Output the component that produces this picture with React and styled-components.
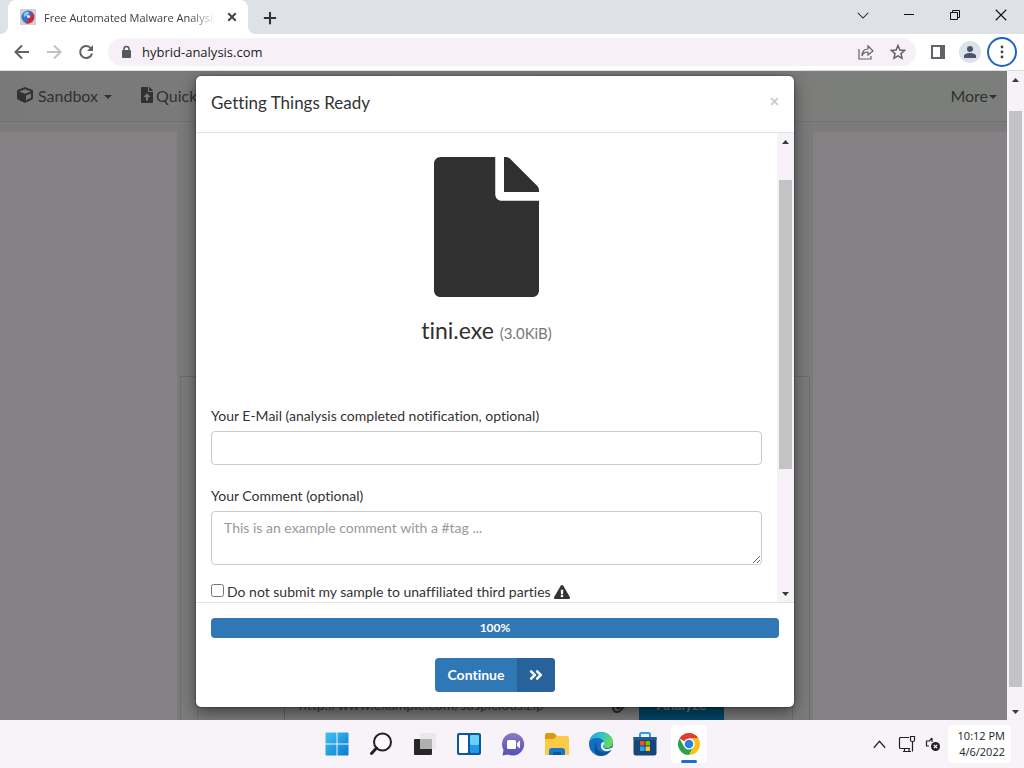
import React from 'react';
import styled, { createGlobalStyle, css } from 'styled-components';
import { FaCube, FaPaperclip, FaExclamationTriangle, FaAngleDoubleRight } from 'react-icons/fa';

const GlobalStyle = createGlobalStyle`
  *, *::before, *::after { box-sizing: border-box; }
  html, body { margin: 0; height: 100%; overflow: hidden; }
  button, input, textarea { font: inherit; color: inherit; }
  button { border: 0; background: none; padding: 0; }
  svg { display: block; flex: none; }
`;

const uiFont = '"Open Sans", "Noto Sans", sans-serif';
const siteFont = 'Lato, "Open Sans", sans-serif';

const Desktop = styled.div`
  display: flex;
  flex-direction: column;
  height: 100vh;
  font-family: ${uiFont};
  font-size: 12px;
  color: #202124;
`;

/* ---- Browser chrome ---- */

const TabStrip = styled.div`
  display: flex;
  align-items: flex-end;
  height: 34px;
  padding-left: 8px;
  background: #dee1e6;
`;

const Tab = styled.div`
  position: relative;
  display: flex;
  align-items: center;
  width: 240px;
  height: 34px;
  padding: 0 8px 0 12px;
  gap: 8px;
  border-radius: 8px 8px 0 0;
  background: #fff;
  &::before, &::after {
    content: '';
    position: absolute;
    bottom: 0;
    width: 8px;
    height: 8px;
  }
  &::before { left: -8px; background: radial-gradient(circle at 0 0, #dee1e6 8px, #fff 8px); }
  &::after { right: -8px; background: radial-gradient(circle at 100% 0, #dee1e6 8px, #fff 8px); }
`;

const TabTitle = styled.span`
  flex: 1;
  overflow: hidden;
  white-space: nowrap;
  color: #3c4043;
  font-size: 11px;
  mask-image: linear-gradient(to right, #000 85%, transparent);
`;

const IconButton = styled.button`
  display: flex;
  align-items: center;
  justify-content: center;
  width: ${(p) => p.$w || 32}px;
  height: ${(p) => p.$h || 32}px;
  color: ${(p) => p.$color || '#5f6368'};
`;

const NewTab = styled(IconButton)`
  margin-left: 6px;
`;

const WindowControls = styled.div`
  display: flex;
  align-self: flex-start;
  margin-left: auto;
`;

const Toolbar = styled.div`
  display: flex;
  align-items: center;
  height: 37px;
  padding: 0 7px 0 6px;
  background: #fff;
  border-bottom: 1px solid #dcdedd;
`;

const Omnibox = styled.div`
  display: flex;
  align-items: center;
  flex: 1;
  height: 28px;
  margin: 0 6px;
  padding: 0 2px 0 12px;
  border-radius: 14px;
  background: #f7f1f7;
`;

const Address = styled.input`
  flex: 1;
  min-width: 0;
  margin-left: 10px;
  padding: 0;
  border: 0;
  outline: 0;
  background: transparent;
  font-size: 13px;
`;

const Avatar = styled.button`
  display: flex;
  align-items: center;
  justify-content: center;
  width: 22px;
  height: 22px;
  margin: 0 6px 0 5px;
  border-radius: 50%;
  background: #dde1e8;
`;

const MenuButton = styled(IconButton)`
  width: 30px;
  height: 30px;
  border: 2px solid #1f62c5;
  border-radius: 50%;
`;

/* ---- Web page ---- */

const Viewport = styled.div`
  position: relative;
  display: flex;
  flex: 1;
  min-height: 0;
  overflow: hidden;
  font-family: ${siteFont};
  font-variant-ligatures: none;
`;

const Page = styled.div`
  position: relative;
  flex: 1;
  min-width: 0;
  overflow: hidden;
  background: #e9e9e9;
`;

const Navbar = styled.nav`
  display: flex;
  align-items: center;
  height: 51px;
  padding: 0 10px 2px 17px;
  border-bottom: 1px solid #d8d8d8;
  background: linear-gradient(to right, #e5e5e5, #e9ece7 60%, #ebefe8);
`;

const NavLink = styled.a`
  display: flex;
  align-items: center;
  gap: ${(p) => p.$gap || 3}px;
  margin-right: ${(p) => p.$after || 0}px;
  color: #5c5e5c;
  font-size: 16px;
  text-decoration: none;
`;

const Caret = styled.span`
  width: 0;
  height: 0;
  margin-left: ${(p) => p.$space || 0}px;
  margin-top: 3px;
  border: 4px solid transparent;
  border-top-color: currentColor;
  border-bottom: 0;
`;

const NavSpacer = styled.span`
  flex: 1;
`;

const Backing = styled.div`
  margin-top: 10px;
  height: 100%;
  padding-right: 17px;
  background: #fbf4fb;
`;

const Container = styled.main`
  max-width: 636px;
  height: 100%;
  margin: 0 auto;
  padding: 244px 3px 0;
  background: #e9e9e9;
`;

const Panel = styled.section`
  height: 400px;
  padding: 307px 16px 0;
  border: 1px solid #cfcfcf;
`;

const UrlForm = styled.form`
  display: flex;
  align-items: stretch;
  height: 40px;
  border: 1px solid #cfcfcf;
`;

const UrlAddon = styled.div`
  width: 87px;
  border-right: 1px solid #b8b8b8;
`;

const UrlInput = styled.input`
  flex: 1;
  min-width: 0;
  padding: 0 14px;
  border: 0;
  background: transparent;
  font-size: 14px;
  &::placeholder { color: #6b6b6b; opacity: 1; }
`;

const Attach = styled(IconButton)`
  width: 40px;
  height: 38px;
  color: #555;
`;

const Analyze = styled.button`
  width: 85px;
  margin-right: 68px;
  background: #0083c0;
  color: #d5e7f2;
  font-size: 14px;
  font-weight: 700;
`;

const Overlay = styled.div`
  position: absolute;
  inset: 0 17px 0 0;
  padding: 5px 17px 0 0;
  background: rgba(0, 0, 0, 0.47);
`;

/* ---- Scrollbar ---- */

const Track = styled.div`
  display: flex;
  flex-direction: column;
  align-items: center;
  width: 17px;
  flex: none;
  background: #f7f2f7;
`;

const ArrowCell = styled.div`
  display: flex;
  align-items: center;
  justify-content: center;
  width: 17px;
  height: 17px;
  color: #3a3a3e;
`;

const Thumb = styled.div`
  width: 13px;
  height: ${(p) => p.$size};
  margin-top: ${(p) => p.$start}px;
  margin-bottom: auto;
  background: #c3c2c5;
`;

function Scrollbar({ start, size }) {
  return (
    <Track aria-hidden="true">
      <ArrowCell>
        <svg width="7" height="4" viewBox="0 0 7 4"><path d="M0 4 3.500 0 7 4Z" fill="currentColor" /></svg>
      </ArrowCell>
      <Thumb $start={start} $size={size} />
      <ArrowCell>
        <svg width="7" height="4" viewBox="0 0 7 4"><path d="M0 0 3.500 4 7 0Z" fill="currentColor" /></svg>
      </ArrowCell>
    </Track>
  );
}

/* ---- Dialog ---- */

const Dialog = styled.div`
  max-width: 598px;
  margin: 0 auto;
  border-radius: 5px;
  background: #fff;
  box-shadow: 0 5px 15px rgba(0, 0, 0, 0.5), 0 0 2px rgba(0, 0, 0, 0.6);
  color: #333;
  font-size: 14px;
  line-height: 20px;
  overflow: hidden;
`;

const DialogHeader = styled.header`
  display: flex;
  align-items: center;
  justify-content: space-between;
  height: 57px;
  padding: 0 15px 2px;
  border-bottom: 1px solid #e3e3e3;
`;

const DialogTitle = styled.h4`
  margin: 0;
  font-size: 17px;
  font-weight: 400;
`;

const CloseDialog = styled(IconButton)`
  width: 9px;
  height: 20px;
  margin-bottom: 4px;
  color: #c8c8c8;
`;

const DialogBody = styled.div`
  display: flex;
  height: calc(100vh - 299px);
  overflow: hidden;
`;

const Fields = styled.form`
  flex: 1;
  padding: 24px 15px 0;
`;

const FileSummary = styled.div`
  display: flex;
  flex-direction: column;
  align-items: center;
  height: 249px;
  color: #303030;
`;

const FileName = styled.div`
  margin-top: 17px;
  font-size: 23px;
  line-height: 32px;
`;

const FileSize = styled.small`
  color: #777;
  font-size: 15px;
`;

const Label = styled.label`
  display: block;
  margin-bottom: 5px;
`;

const inputBox = css`
  display: block;
  width: 100%;
  padding: 6px 12px;
  border: 1px solid #ccc;
  border-radius: 4px;
  background: #fff;
`;

const TextField = styled.input`
  ${inputBox}
  height: 34px;
  margin-bottom: 21px;
`;

const TextArea = styled.textarea`
  ${inputBox}
  height: 54px;
  margin-bottom: 17px;
  resize: vertical;
  &::placeholder { color: #999; opacity: 1; }
`;

const CheckRow = styled.div`
  display: flex;
  align-items: center;
  gap: 3px;
  input { width: 13px; height: 13px; margin: 0 0 4px; }
`;

const DialogFooter = styled.footer`
  display: flex;
  flex-direction: column;
  align-items: center;
  gap: 20px;
  padding: 15px;
  border-top: 1px solid #e3e3e3;
`;

const Progress = styled.div`
  width: 100%;
  height: 20px;
  border-radius: 4px;
  background: #3077b5;
  color: #fff;
  font-size: 12px;
  font-weight: 700;
  text-align: center;
`;

const ContinueButton = styled.button`
  display: flex;
  align-items: stretch;
  height: 34px;
  border-radius: 4px;
  overflow: hidden;
  background: #3077b5;
  color: #fff;
  font-weight: 700;
  span { width: 82px; line-height: 34px; }
`;

const ContinueIcon = styled.i`
  display: flex;
  align-items: center;
  justify-content: center;
  width: 38px;
  background: #28629a;
`;

/* ---- Taskbar ---- */

const Taskbar = styled.footer`
  display: grid;
  grid-template-columns: 1fr auto 1fr;
  align-items: center;
  height: 48px;
  background: #f7f3f8;
`;

const Apps = styled.div`
  grid-column: 2;
  display: flex;
  padding-left: 2px;
`;

const AppButton = styled.button`
  position: relative;
  display: flex;
  align-items: center;
  justify-content: center;
  width: 36px;
  height: 38px;
  margin: 0 4px;
  border-radius: 4px;
  background: ${(p) => (p.$active ? '#fff' : 'transparent')};
  ${(p) => p.$active && css`
    &::after {
      content: '';
      position: absolute;
      bottom: 0;
      left: 10px;
      width: 16px;
      height: 3px;
      border-radius: 2px;
      background: #1a6fcb;
    }
  `}
`;

const Tray = styled.div`
  display: flex;
  align-items: center;
  justify-content: flex-end;
  padding-right: 13px;
`;

const Clock = styled.div`
  padding: 3px 6px 3px 10px;
  margin-left: 4px;
  border-radius: 4px;
  background: #fff;
  font-size: 11px;
  line-height: 16px;
  text-align: right;
  white-space: nowrap;
`;

const Favicon = () => (
  <svg width="16" height="16" viewBox="0 0 16 16">
    <rect width="16" height="16" fill="#d6cfcc" />
    <circle cx="8" cy="8" r="6.500" fill="#2f78cc" />
    <path d="M10 2a6.500 6.500 0 0 1-5 12c2-1 3-2 3-4l3-2c1-2 0-4-1-6Z" fill="#d8262c" />
    <path d="M3.500 5c2-3 4-3 5.500-2L8 6 4 8Z" fill="#8cc6f2" />
    <circle cx="8.500" cy="7.500" r="1.500" fill="#f4e9ee" />
  </svg>
);

const Line = ({ d, size = 16, w = 2 }) => (
  <svg width={size} height={size} viewBox="0 0 16 16" fill="none" stroke="currentColor" strokeWidth={w}>
    <path d={d} />
  </svg>
);

const FileIcon = ({ height, upload }) => (
  <svg height={height} width={height * 0.75} viewBox="0 0 384 512" fill="currentColor">
    <path
      fillRule="evenodd"
      d={'M224 136V0H24C10.700 0 0 10.700 0 24v464c0 13.300 10.700 24 24 24h336c13.300 0 24-10.700 24-24V160H248c-13.200 0-24-10.800-24-24zM384 121.900v6.100H256V0h6.100c6.400 0 12.500 2.500 17 7l97.900 98c4.500 4.500 7 10.600 7 16.900z'
        + (upload ? 'M192 200 305 320H225V430H159V320H79Z' : '')}
    />
  </svg>
);

const StartLogo = () => (
  <svg width="24" height="24" viewBox="0 0 24 24">
    <defs>
      <linearGradient id="win" x1="0" y1="0" x2="1" y2="1" gradientUnits="objectBoundingBox">
        <stop offset="0" stopColor="#3fc4f3" /><stop offset="1" stopColor="#0a78d0" />
      </linearGradient>
    </defs>
    <path d="M1 .5h10.500v11H.5V1ZM12.500.5H23l.5.500v10.500h-11ZM.5 12.500h11v11H1l-.5-.5ZM12.500 12.500h11V23l-.5.500H12.500Z" fill="url(#win)" />
  </svg>
);

const SearchLogo = () => (
  <svg width="24" height="24" viewBox="0 0 24 24" fill="none" stroke="#222" strokeLinecap="round">
    <circle cx="13.500" cy="10" r="8.500" fill="#fbf9fc" strokeWidth="2" />
    <path d="M7.500 16 2.500 21.500" strokeWidth="3" />
  </svg>
);

const TaskViewLogo = () => (
  <svg width="26" height="24" viewBox="0 0 26 24">
    <rect x="2" y="7" width="18" height="16" rx="1" fill="#272727" />
    <rect x="8" y="1" width="16" height="16" rx="1" fill="#e9e8ea" />
    <rect x="8" y="7" width="12" height="10" fill="#b0b0b0" />
  </svg>
);

const WidgetsLogo = () => (
  <svg width="26" height="24" viewBox="0 0 26 24">
    <rect x="1" y="1" width="24" height="22" rx="2" fill="#0d56a0" />
    <rect x="3" y="3" width="9" height="18" rx="1" fill="#fff" />
    <rect x="14" y="3" width="9" height="10" rx="1" fill="#69d2fa" />
    <rect x="14" y="13" width="9" height="8" rx="1" fill="#219be8" />
  </svg>
);

const ChatLogo = () => (
  <svg width="26" height="26" viewBox="0 0 26 26">
    <defs>
      <linearGradient id="chat" x1="0" y1="0" x2="0" y2="1">
        <stop offset="0" stopColor="#8f79c4" /><stop offset="1" stopColor="#5150bb" />
      </linearGradient>
    </defs>
    <path d="M13 2A11.300 11.300 0 1 1 8 23.500L2.500 24.500 3.500 19A11.300 11.300 0 0 1 13 2Z" fill="url(#chat)" />
    <rect x="7" y="9" width="9" height="9" rx="1.500" fill="#fff" />
    <path d="m17 12 3-2.500v8L17 15Z" fill="#fff" />
  </svg>
);

const FolderLogo = () => (
  <svg width="26" height="24" viewBox="0 0 26 24">
    <path d="M1 3a2 2 0 0 1 2-2h7l3 3-3 4H1Z" fill="#d99a12" />
    <path d="M1 7h9l3-3h10a2 2 0 0 1 2 2v17H1Z" fill="#fbcb45" />
    <path d="M5 23v-4a3 3 0 0 1 3-3h10a3 3 0 0 1 3 3v4Z" fill="#1578c8" />
    <path d="M9 20h8v3H9Z" fill="#0b569c" />
  </svg>
);

const EdgeLogo = () => (
  <svg width="26" height="26" viewBox="0 0 26 26">
    <defs>
      <linearGradient id="edgeTop" x1="0" y1="0" x2="1" y2="0.300">
        <stop offset="0" stopColor="#1f9edb" /><stop offset="0.550" stopColor="#31c4cd" /><stop offset="1" stopColor="#67da57" />
      </linearGradient>
    </defs>
    <circle cx="13" cy="13" r="12" fill="#156fc1" />
    <path d="M1 12C2 5 7 1 13 1c7 0 12 5 12 10 0 4-3 6-6 6-2 0-4-1-4-2s1-1 1-3c0-3-3-5-7-5-4 0-7 2-8 5Z" fill="url(#edgeTop)" />
    <path d="M10 10c-3 3-2 10 4 11 4 1 7-1 9-3-2 5-7 7-11 7-6-1-8-10-2-15Z" fill="#11509c" />
    <path d="M16 11c1 3-2 3-1 5 1 2 5 3 8 1l3-1v2l-3 1c-5 3-11 0-10-5 0-2 1-3 3-3Z" fill="#f7f3f8" />
  </svg>
);

const StoreLogo = () => (
  <svg width="26" height="26" viewBox="0 0 26 26">
    <path d="M8 7V3.500A1.500 1.500 0 0 1 9.500 2h7A1.500 1.500 0 0 1 18 3.500V7" fill="none" stroke="#2d9be0" strokeWidth="2" />
    <path d="M1.500 6h23v16a2.500 2.500 0 0 1-2.500 2.500H4A2.500 2.500 0 0 1 1.500 22Z" fill="#154579" />
    <path d="M1.500 6h23v3h-23Z" fill="#1b5c99" />
    <path d="M8 10h4.500v4.500H8Z" fill="#f25022" /><path d="M13.500 10H18v4.500h-4.500Z" fill="#7fba00" />
    <path d="M8 15.500h4.500V20H8Z" fill="#24a9ef" /><path d="M13.500 15.500H18V20h-4.500Z" fill="#ffc226" />
  </svg>
);

const ChromeLogo = () => (
  <svg width="24" height="24" viewBox="0 0 24 24">
    <circle cx="12" cy="12" r="11" fill="#fff" />
    <path d="M12 12 2.470 6.500A11 11 0 0 1 21.530 6.500H12Z" fill="#e33b2e" />
    <path d="M2.470 6.500A11 11 0 0 0 12 23l4.760-8.250L7.240 14.750Z" fill="#2da24c" />
    <path d="M21.530 6.500A11 11 0 0 1 12 23l4.760-8.250A5.500 5.500 0 0 0 12 6.500Z" fill="#fbc116" />
    <circle cx="12" cy="12" r="5.500" fill="#fff" /><circle cx="12" cy="12" r="4.300" fill="#2f7de1" />
  </svg>
);

const apps = [
  ['Start', StartLogo], ['Search', SearchLogo], ['Task view', TaskViewLogo],
  ['Widgets', WidgetsLogo], ['Chat', ChatLogo], ['File Explorer', FolderLogo],
  ['Microsoft Edge', EdgeLogo], ['Microsoft Store', StoreLogo], ['Google Chrome', ChromeLogo],
];

function BrowserChrome() {
  return (
    <>
      <TabStrip>
        <Tab>
          <Favicon />
          <TabTitle>Free Automated Malware Analysis</TabTitle>
          <IconButton $w={16} $h={16} $color="#3c4043" aria-label="Close tab"><Line size={12} w={2.5} d="M3 3 13 13M13 3 3 13" /></IconButton>
        </Tab>
        <NewTab $color="#333" aria-label="New tab"><Line size={14} w={2.4} d="M8 1V15M1 8H15" /></NewTab>
        <WindowControls>
          <IconButton $w={46} $h={30} $color="#222" aria-label="Search tabs"><Line size={12} w={1.4} d="m1 5 7 7 7-7" /></IconButton>
          <IconButton $w={46} $h={30} $color="#111" aria-label="Minimize">
            <svg width="12" height="12" viewBox="0 0 12 12" fill="none" stroke="currentColor"><path d="M1 5.500H11" /></svg>
          </IconButton>
          <IconButton $w={46} $h={30} $color="#111" aria-label="Restore">
            <svg width="12" height="12" viewBox="0 0 12 12" fill="none" stroke="currentColor"><path d="M1.500 3.500h7v7h-7ZM3.500 3.500v-2h7v7h-2" /></svg>
          </IconButton>
          <IconButton $w={46} $h={30} $color="#111" aria-label="Close"><Line size={12} w={1.5} d="M1 1 15 15M15 1 1 15" /></IconButton>
        </WindowControls>
      </TabStrip>
      <Toolbar>
        <IconButton aria-label="Back"><Line d="M15 8H2M8 1.500 1.500 8 8 14.500" /></IconButton>
        <IconButton $color="#bfc1c4" aria-label="Forward"><Line d="M1 8H14M8 1.500 14.500 8 8 14.500" /></IconButton>
        <IconButton aria-label="Reload">
          <svg width="16" height="16" viewBox="0 0 16 16"><path d="M13 4.500A6 6 0 1 0 14 9.500" fill="none" stroke="currentColor" strokeWidth="2" /><path d="M15 1v6H9Z" fill="currentColor" /></svg>
        </IconButton>
        <Omnibox>
          <svg width="12" height="14" viewBox="0 0 12 14"><rect x="2" y="5" width="9" height="8" rx="1" fill="#55585c" /><path d="M4 6V4a2.500 2.500 0 0 1 5 0v2" fill="none" stroke="#55585c" strokeWidth="1.500" /></svg>
          <Address aria-label="Address" defaultValue="hybrid-analysis.com" />
          <IconButton aria-label="Share"><Line w={1.2} d="M1 5v10h12v-3M4 12c0-5 3-7 6-7V2l5 5-5 4V8c-3 0-5 1-6 4Z" /></IconButton>
          <IconButton aria-label="Bookmark"><Line w={1.5} d="m8 1.500 1.900 4.500 4.800.400-3.700 3.200 1.100 4.700L8 11.800l-4.100 2.500L5 9.600 1.300 6.400 6.100 6Z" /></IconButton>
        </Omnibox>
        <IconButton aria-label="Side panel">
          <svg width="14" height="14" viewBox="0 0 14 14"><path fill="currentColor" fillRule="evenodd" d="M0 0h14v14H0ZM2 2v10h7V2Z" /></svg>
        </IconButton>
        <Avatar aria-label="Profile">
          <svg width="12" height="12" viewBox="0 0 12 12" fill="#49536f"><circle cx="6" cy="3" r="3" /><path d="M0 12V10c0-2 3-3 6-3s6 1 6 3v2Z" /></svg>
        </Avatar>
        <MenuButton aria-label="Browser menu">
          <svg width="4" height="14" viewBox="0 0 4 14" fill="#444"><circle cx="2" cy="2" r="1.400" /><circle cx="2" cy="7" r="1.400" /><circle cx="2" cy="12" r="1.400" /></svg>
        </MenuButton>
      </Toolbar>
    </>
  );
}

function SitePage() {
  return (
    <Page>
      <Navbar>
        <NavLink href="#sandbox" $after={29} $gap={5}><FaCube size={16} />Sandbox<Caret $space={1} /></NavLink>
        <NavLink href="#quick"><FileIcon height={16} upload />Quick</NavLink>
        <NavSpacer />
        <NavLink href="#more" $gap={1}>More<Caret /></NavLink>
      </Navbar>
      <Backing>
        <Container>
          <Panel>
            <UrlForm>
              <UrlAddon />
              <UrlInput aria-label="URL to analyze" placeholder="http://www.example.com/suspicious.zip" />
              <Attach type="button" aria-label="Attach file"><FaPaperclip size={17} /></Attach>
              <Analyze type="button">Analyze</Analyze>
            </UrlForm>
          </Panel>
        </Container>
      </Backing>
    </Page>
  );
}

function UploadDialog() {
  return (
    <Dialog role="dialog" aria-labelledby="dialog-title">
      <DialogHeader>
        <DialogTitle id="dialog-title">Getting Things Ready</DialogTitle>
        <CloseDialog aria-label="Close dialog"><Line size={9} w={3} d="M2 2 14 14M14 2 2 14" /></CloseDialog>
      </DialogHeader>
      <DialogBody>
        <Fields>
          <FileSummary>
            <FileIcon height={140} />
            <FileName>tini.exe <FileSize>(3.0KiB)</FileSize></FileName>
          </FileSummary>
          <Label htmlFor="email">Your E-Mail (analysis completed notification, optional)</Label>
          <TextField id="email" type="email" />
          <Label htmlFor="comment">Your Comment (optional)</Label>
          <TextArea id="comment" placeholder="This is an example comment with a #tag ..." />
          <CheckRow>
            <input type="checkbox" id="private" />
            <label htmlFor="private">Do not submit my sample to unaffiliated third parties</label>
            <FaExclamationTriangle size={16} />
          </CheckRow>
        </Fields>
        <Scrollbar start={30} size="289px" />
      </DialogBody>
      <DialogFooter>
        <Progress role="progressbar" aria-label="Upload progress" aria-valuenow={100}>100%</Progress>
        <ContinueButton type="button"><span>Continue</span><ContinueIcon><FaAngleDoubleRight size={16} /></ContinueIcon></ContinueButton>
      </DialogFooter>
    </Dialog>
  );
}

export default function App() {
  return (
    <Desktop>
      <GlobalStyle />
      <BrowserChrome />
      <Viewport>
        <SitePage />
        <Scrollbar start={23} size="calc(100% - 73px)" />
        <Overlay><UploadDialog /></Overlay>
      </Viewport>
      <Taskbar>
        <Apps>
          {apps.map(([name, Logo]) => (
            <AppButton key={name} aria-label={name} $active={name === 'Google Chrome'}><Logo /></AppButton>
          ))}
        </Apps>
        <Tray>
          <IconButton $w={24} $color="#222" aria-label="Hidden icons"><Line size={13} w={1.5} d="m1 12 7-8 7 8" /></IconButton>
          <IconButton $w={30} $color="#222" aria-label="Network">
            <svg width="18" height="18" viewBox="0 0 18 18" fill="none" stroke="currentColor" strokeWidth="1.200"><path d="M11 2.500H2.500a1 1 0 0 0-1 1v9a1 1 0 0 0 1 1H12M5 16.500h8M6.500 13.500v3M11 13.500v3M12.500 1.500h4V5a1.500 1.500 0 0 1-1.500 1.500h-1A1.500 1.500 0 0 1 12.500 5ZM14.500 6.500v10" /></svg>
          </IconButton>
          <IconButton $w={22} $color="#222" aria-label="Volume muted">
            <svg width="16" height="16" viewBox="0 0 16 16"><path d="M7 2 4.500 5H1.500v5H4M7 2v4" fill="none" stroke="currentColor" strokeWidth="1.200" /><circle cx="10.500" cy="10.500" r="4.500" fill="currentColor" /><path d="m8.800 8.800 3.400 3.400M12.200 8.800l-3.400 3.400" stroke="#fff" strokeWidth="1.200" /></svg>
          </IconButton>
          <Clock>10:12 PM<br />4/6/2022</Clock>
        </Tray>
      </Taskbar>
    </Desktop>
  );
}
